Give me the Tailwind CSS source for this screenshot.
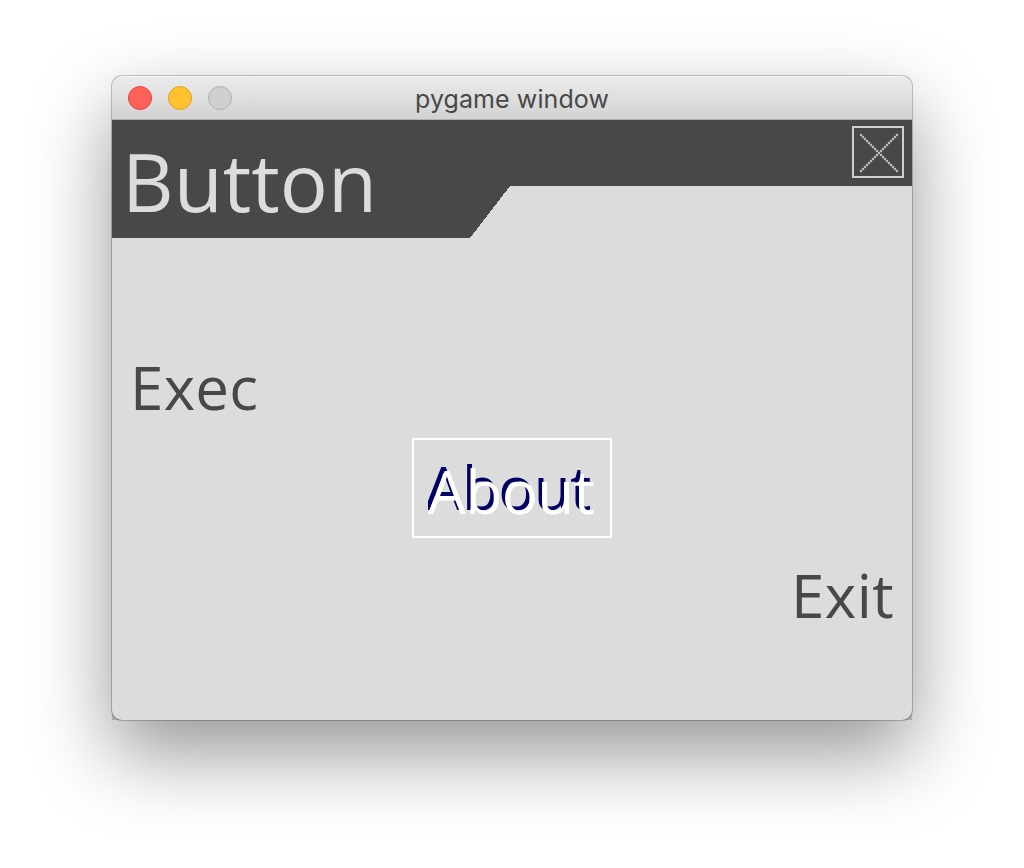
<!DOCTYPE html>
<html lang="en">
<head>
<meta charset="utf-8">
<title>pygame window</title>
<script src="https://cdn.jsdelivr.net/npm/@tailwindcss/browser@4"></script>
</head>
<body class="h-[868px] w-[1024px] overflow-hidden bg-white pt-[76px]">
<div class="mx-auto h-[644px] w-[800px] rounded-t-[10px] bg-[#adadad] shadow-[0_33px_80px_rgba(0,0,0,0.42)]">
<main class="flex h-full w-full flex-col overflow-hidden rounded-[10px] bg-[#dcdcdc] shadow-[0_0_0_1px_rgba(0,0,0,0.22)]">
  <header class="grid h-11 shrink-0 grid-cols-3 items-center border-t border-b border-t-[#f6f6f6] border-b-[#b0b0b0] bg-linear-to-b from-[#ebebeb] to-[#d2d2d2] px-4">
    <div class="flex gap-4">
      <span class="size-6 rounded-full border border-[#e0443e] bg-[#ff6159]"></span>
      <span class="size-6 rounded-full border border-[#dea123] bg-[#ffc12f]"></span>
      <span class="size-6 rounded-full border border-[#b0b0b0] bg-[#cfcfcf]"></span>
    </div>
    <h1 class="pt-0.5 text-center font-['Inter'] text-[25px] leading-none tracking-[0.08px] whitespace-nowrap text-[#484848]">pygame window</h1>
  </header>
  <section class="grid h-[600px] grid-rows-[118px_200px_100px_182px]">
    <div class="relative">
      <svg class="absolute inset-0" width="800" height="118" shape-rendering="crispEdges"><path d="M0 0H800V66H398L358 118H0Z" fill="#484848"/></svg>
      <div class="relative flex items-start justify-between pr-2 pl-2.5">
        <h2 class="pt-[21px] font-['Open_Sans'] text-[80px] leading-none whitespace-nowrap text-[#dcdcdc]">Button</h2>
        <svg class="mt-1.5" width="52" height="52" fill="none" stroke="#cfcfcf"><path d="M1 1H51V51H1Z" stroke-width="2"/><path d="M8 8L46 46M46 8L8 46" stroke-width="2" stroke-dasharray="2 .828" stroke-dashoffset="-.4"/></svg>
      </div>
    </div>
    <div class="pt-[119px] pl-[18px] font-['Open_Sans'] text-[60px] leading-none tracking-[0.3px] text-[#484848]">Exec</div>
    <div class="mx-auto h-[100px] w-[200px] border-2 border-white pl-3.5">
      <div class="h-24 overflow-hidden pt-[21px] font-['Open_Sans'] text-[60px] leading-none tracking-[-0.5px] whitespace-nowrap text-white [text-shadow:-3.5px_-4px_0_#000064]">About</div>
    </div>
    <div class="pt-[27px] pr-[18px] text-right font-['Open_Sans'] text-[60px] leading-none tracking-[0.4px] text-[#484848]">Exit</div>
  </section>
</main>
</div>
</body>
</html>
